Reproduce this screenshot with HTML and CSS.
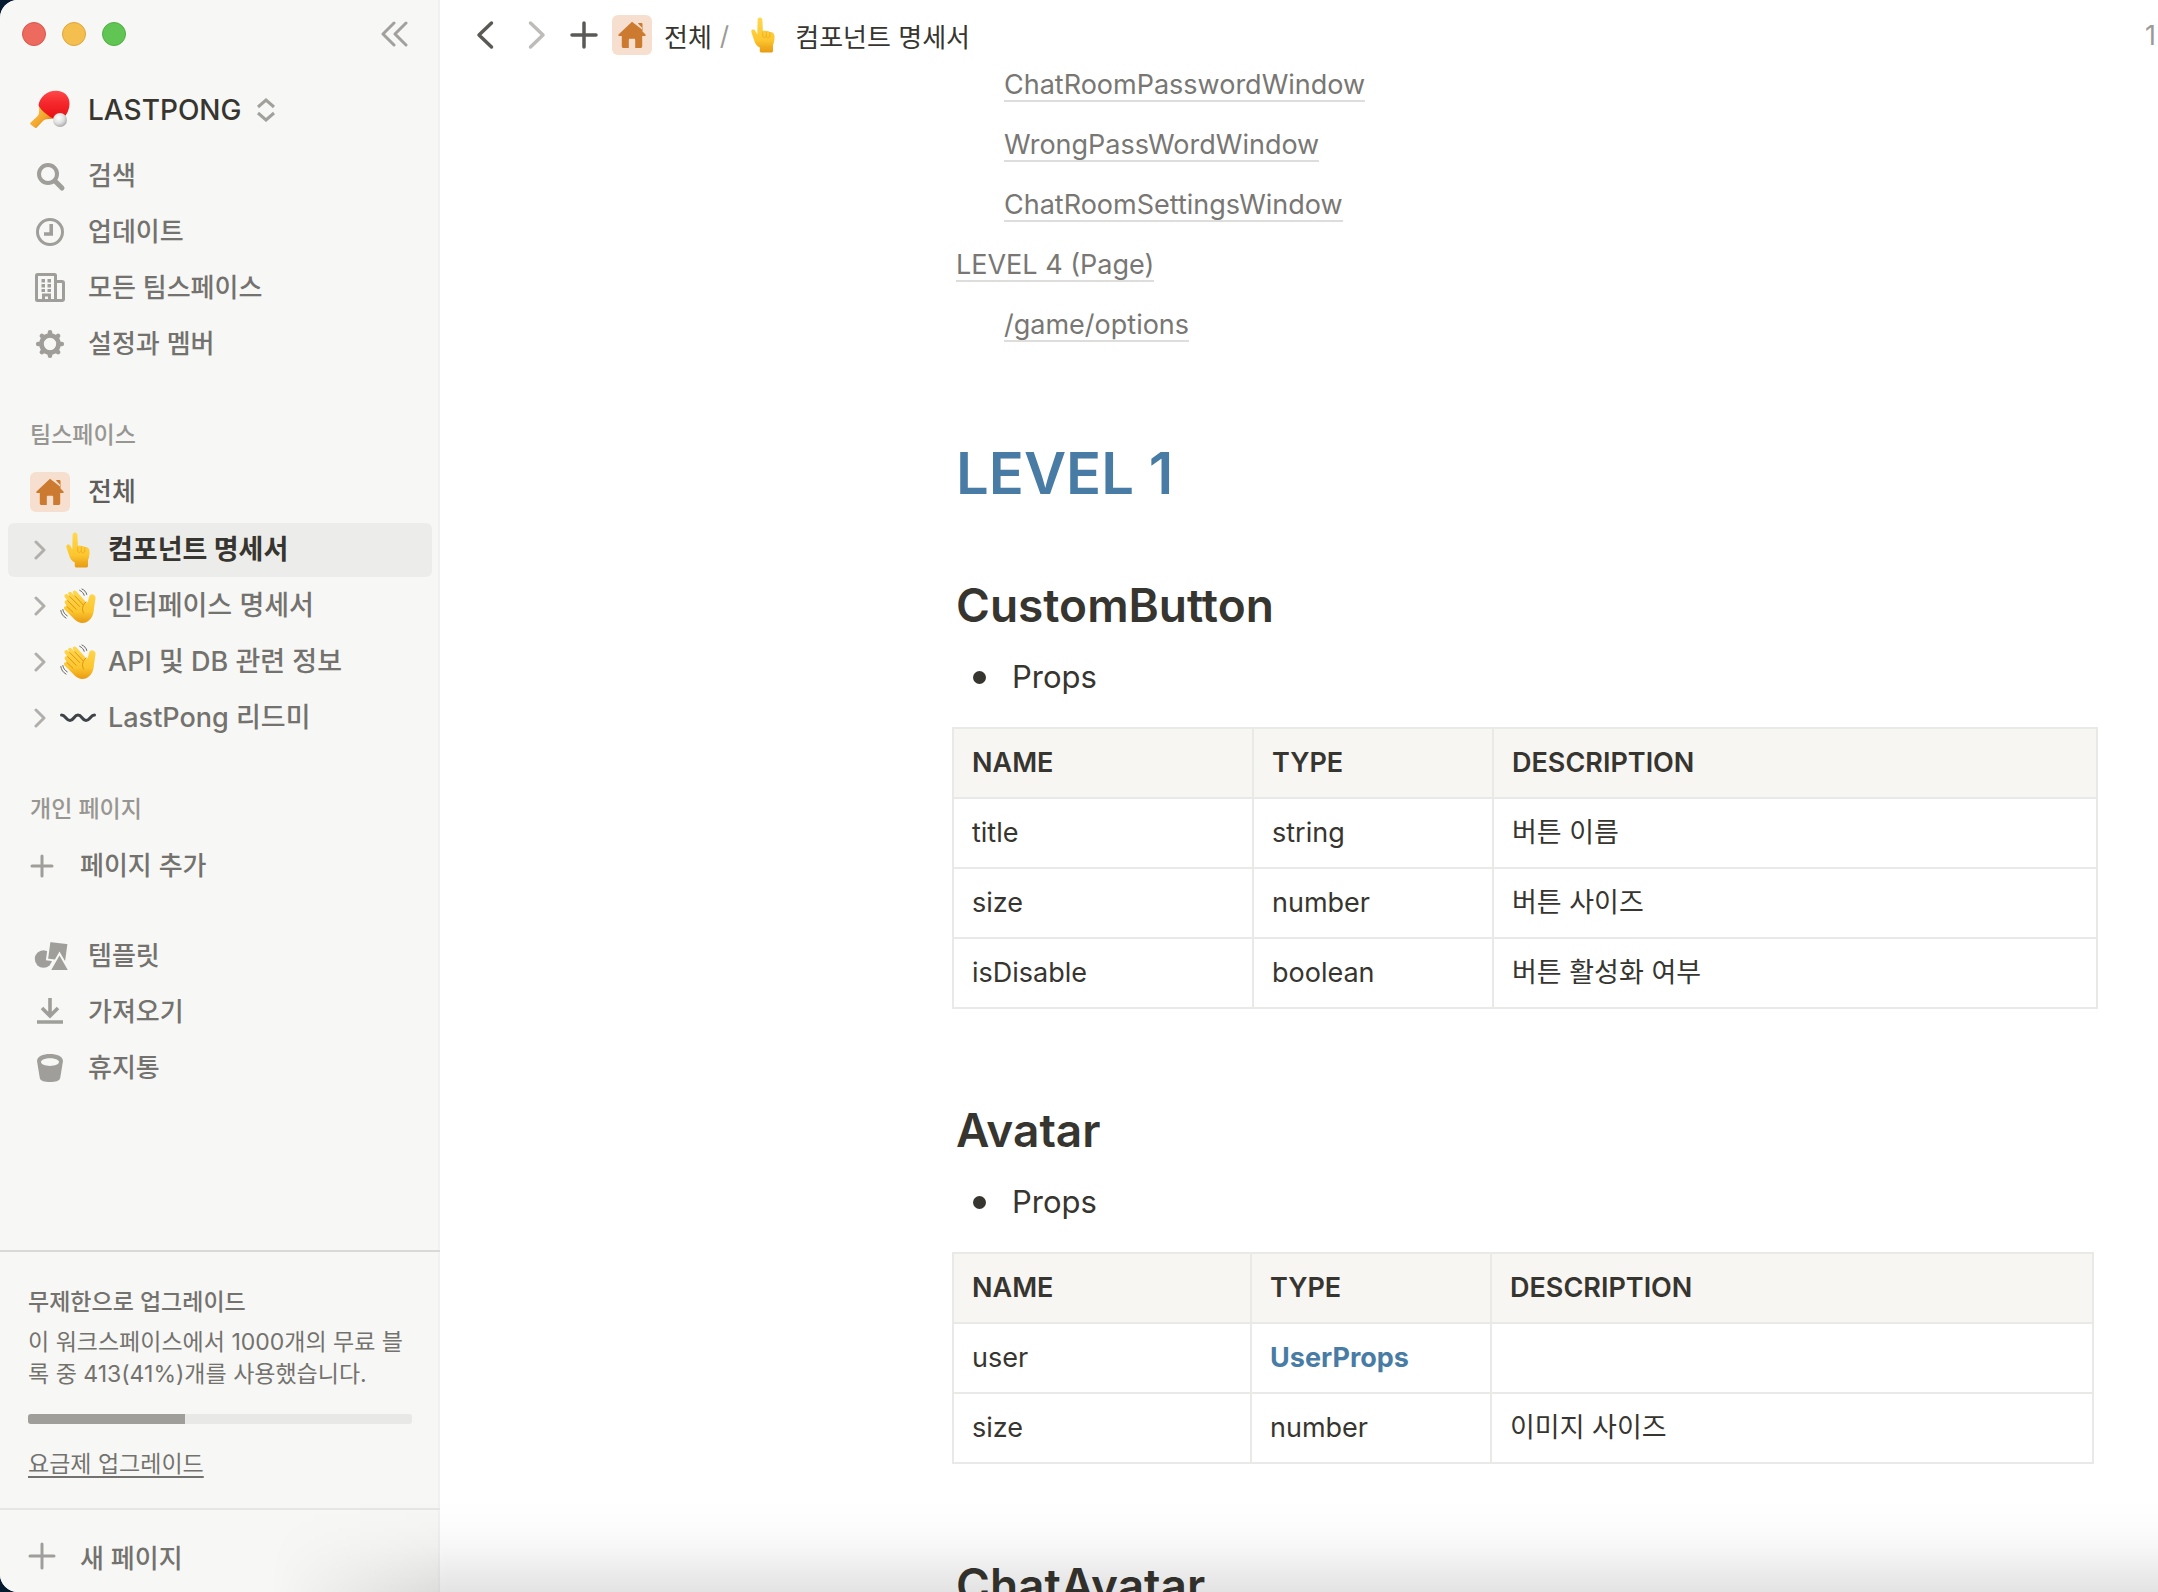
FILE: index.html
```html
<!DOCTYPE html>
<html lang="ko">
<head>
<meta charset="utf-8">
<title>컴포넌트 명세서</title>
<link rel="stylesheet" href="styles.css">
</head>
<body>
<svg class="defs" aria-hidden="true">
  <defs>
    <linearGradient id="skin" x1="0" y1="0" x2="0" y2="1">
      <stop offset="0" stop-color="#ffd84f"/><stop offset=".65" stop-color="#fcc62f"/><stop offset="1" stop-color="#e89a12"/>
    </linearGradient>
    <linearGradient id="rubber" x1="0" y1="0" x2="0" y2="1">
      <stop offset="0" stop-color="#ff4a4a"/><stop offset=".4" stop-color="#f52a2e"/><stop offset="1" stop-color="#e80f14"/>
    </linearGradient>
    <radialGradient id="ball" cx=".4" cy=".35" r=".8">
      <stop offset="0" stop-color="#fff"/><stop offset=".5" stop-color="#dedede"/><stop offset="1" stop-color="#8e8e8e"/>
    </radialGradient>
    <linearGradient id="grip" x1="0" y1="0" x2="1" y2="1">
      <stop offset="0" stop-color="#ffcf52"/><stop offset=".55" stop-color="#f3a52c"/><stop offset="1" stop-color="#b8640c"/>
    </linearGradient>
  </defs>
  <symbol id="house" viewBox="0 0 28 28">
    <path fill="#cb7a2f" d="M14 .8 .5 13.400c-.6.8-.2 1.600.7 1.600h2.600v10.600c0 .9.6 1.400 1.400 1.400H10.800V19c0-.8.4-1.200 1.200-1.200h4c.8 0 1.200.4 1.200 1.200v8h5.600c.8 0 1.400-.5 1.400-1.400V15h2.600c.9 0 1.300-.8.7-1.600L24.500 10.400V3.200c0-.8-.4-1.200-1.200-1.200h-2.200c-.5 0-.8.1-1.100.4l4 4.300v1.900z"/>
  </symbol>
  <symbol id="point" viewBox="0 0 24 36">
    <path fill="url(#skin)" d="M6.600 3.200C6.600 1.400 7.600.5 9 .5s2.400 1 2.400 2.700l.5 10.900c1-.7 2.400-.7 3.400.2 1.200-.6 2.600-.3 3.500.7 2.600-.3 4.600 1.200 4.700 4.200.1 3.500-.4 6.400-1.500 8.900v6c0 .9-.5 1.400-1.400 1.400H10.200c-.9 0-1.400-.5-1.400-1.400v-3.500C5.600 28.900 4 26.600 3 23L.5 15.600c-.5-1.500 0-2.700 1.100-3.100 1.300-.4 2.300.3 3 1.700l1.700 3.200z"/>
    <path fill="none" stroke="#eeaa1c" stroke-width=".8" stroke-linecap="round" d="M11.700 15v4c.2 2 3.200 2 3.400.2M15.300 14.800v4.600c.3 1.900 3.100 1.900 3.400.1M18.800 15.500v4M9.400 29.500c3.500 1.300 8.500 1.300 12-.4"/>
  </symbol>
  <symbol id="wave" viewBox="0 0 36 36">
    <path fill="url(#skin)" d="M5 15.200c-1.300-1.800.9-3.900 2.600-2.500L4.800 9.200C3.500 7.300 5.900 5 7.700 6.600l2 1.900-1.200-1.900C7.400 4.600 9.800 2.800 11.500 4.500l3.300 3.400-1.700-2.700c-1.200-2 1.400-3.800 2.900-2.100l9.700 10.700c1.200 1.200 2.200.4 2.400-1.200l1-3.800c.5-2 2-2.800 3.700-2.400 2.100.5 2.900 1.800 2.700 3.900L34 20.500c-.3 6.500-3 11.600-7.800 13.700-4.500 1.900-8.900.1-12.300-3.400L4.500 21.300c-1.700-1.800.5-4.100 2.400-2.700z"/>
    <path fill="none" stroke="#df9415" stroke-width="1" stroke-linecap="round" d="m7.600 12.700 8.600 8.600M9.700 8.500l10 10M14.800 7.900l8.300 8.900M6.900 18.600l6 5.600M26 14c-3.500 3-4.500 7-2.500 11"/>
    <path fill="none" stroke="#666" stroke-width="1" stroke-linecap="round" d="M22 1c2.400 1 4.200 3 4.800 5.500M19.700 2.300c2.300 1 4 3 4.500 5M.8 22.500c.4 3.200 2.300 6 5.200 7.600M2.800 21.500c.4 2.600 2 5 4.400 6.300"/>
  </symbol>
  <symbol id="chev" viewBox="0 0 12 20">
    <path fill="none" stroke="#b0afac" stroke-width="3" stroke-linecap="round" stroke-linejoin="round" d="m2 2 8 8-8 8"/>
  </symbol>
</svg>

<div class="app">
  <aside class="sidebar">
    <header class="titlebar">
      <div class="lights">
        <button class="light red" aria-label="닫기"></button>
        <button class="light yellow" aria-label="최소화"></button>
        <button class="light green" aria-label="확대"></button>
      </div>
      <button class="collapse" aria-label="사이드바 닫기">
        <svg width="28" height="26" viewBox="0 0 28 26"><path fill="none" stroke="#a1a09c" stroke-width="3" stroke-linecap="round" stroke-linejoin="round" d="M14 2 3 13l11 11M26 2 15 13l11 11"/></svg>
      </button>
    </header>

    <button class="workspace">
      <svg class="slot" viewBox="0 0 40 40">
        <path fill="url(#grip)" d="M9 15.500 24 28.500l-7.500.7c-2 .3-3.300 1.300-4.500 2.700L6.800 37.400c-.7.700-1.400.8-2.100.2L.7 34.400c-.7-.6-.7-1.300 0-2L7.400 26.200c1.200-1.300 1.700-2.700 1.700-4.500z"/>
        <path fill="url(#rubber)" d="M8.500 15.500C9.500 7 17 .7 26 .7c8 0 13.500 5.300 13.500 12.500 0 6.300-2.500 11.500-7 15.600l-9.300-.4c-3-1-12-7.500-14.700-12.900z"/>
        <circle cx="30" cy="30" r="7" fill="url(#ball)"/>
      </svg>
      <span>LASTPONG</span>
      <svg width="18" height="24" viewBox="0 0 18 24"><path fill="none" stroke="#a1a09c" stroke-width="3" d="m1 9 8-7 8 7M1 15l8 7 8-7"/></svg>
    </button>

    <nav class="group">
      <a class="item" href="#"><svg class="slot" viewBox="0 0 40 40"><g fill="none" stroke="#9f9e9a"><circle cx="18" cy="18" r="9" stroke-width="4"/><path stroke-width="5" stroke-linecap="round" d="m25 25 7 7"/></g></svg><span>검색</span></a>
      <a class="item" href="#"><svg class="slot" viewBox="0 0 40 40"><g fill="none" stroke="#9f9e9a" stroke-width="3"><circle cx="20" cy="20" r="12.500"/><path stroke-width="3.600" d="M21.200 12v10H14"/></g></svg><span>업데이트</span></a>
      <a class="item" href="#"><svg class="slot" viewBox="0 0 40 40"><g fill="none" stroke="#9f9e9a" stroke-width="3"><rect x="6.500" y="6.500" width="19" height="26" rx="1"/><path d="M26 13.500h6c1 0 1.500.5 1.500 1.500v16c0 1-.5 1.500-1.500 1.500h-7M13.500 33v-6h6v6" /></g><path fill="#9f9e9a" d="M11.500 11H15v3.500h-3.500zM17.500 11H21v3.500h-3.500zM11.500 16H15v3.500h-3.500zM17.500 16H21v3.500h-3.500zM11.500 21H15v3h-3.500zM17.500 21H21v3h-3.500z"/></svg><span>모든 팀스페이스</span></a>
      <a class="item" href="#"><svg class="slot" viewBox="0 0 40 40"><circle cx="20" cy="20" r="8.500" fill="none" stroke="#9f9e9a" stroke-width="4.600"/><g stroke="#9f9e9a" stroke-width="4.600" stroke-linecap="round"><path d="M20 8.200v3M20 28.800v3M8.200 20h3M28.800 20h3M11.900 11.900l2 2M26.100 26.100l2 2M11.900 28.100l2-2M26.100 13.900l2-2"/></g></svg><span>설정과 멤버</span></a>
    </nav>

    <h2 class="label">팀스페이스</h2>
    <a class="item team" href="#"><span class="slot home"><svg width="28" height="28"><use href="#house"/></svg></span><span>전체</span></a>
    <nav class="group pages">
      <a class="item page current" href="#"><svg class="chev"><use href="#chev"/></svg><svg class="emoji"><use href="#point"/></svg><span>컴포넌트 명세서</span></a>
      <a class="item page" href="#"><svg class="chev"><use href="#chev"/></svg><svg class="emoji"><use href="#wave"/></svg><span>인터페이스 명세서</span></a>
      <a class="item page" href="#"><svg class="chev"><use href="#chev"/></svg><svg class="emoji"><use href="#wave"/></svg><span>API 및 DB 관련 정보</span></a>
      <a class="item page" href="#"><svg class="chev"><use href="#chev"/></svg><svg class="emoji" viewBox="0 0 36 36"><path fill="none" stroke="#3e4347" stroke-width="3" stroke-linecap="round" d="M1.500 15c4 0 4.500 5.500 8.500 5.500S14 15 18 15s4 5.500 8 5.500 4.500-5.500 8.500-5.500"/></svg><span>LastPong 리드미</span></a>
    </nav>

    <h2 class="label">개인 페이지</h2>
    <button class="item add"><svg width="24" height="24" viewBox="0 0 24 24"><path stroke="#9f9e9a" stroke-width="3" stroke-linecap="round" d="M12 2v20M2 12h20"/></svg><span>페이지 추가</span></button>

    <nav class="group tools">
      <a class="item" href="#"><svg class="slot" viewBox="0 0 40 40"><g fill="#9f9e9a"><circle cx="13.500" cy="23" r="8.700"/><path stroke="#f7f7f5" stroke-width="2" d="m19.500 5 19 2.200L36 26l-19-2.500z"/><path stroke="#f7f7f5" stroke-width="2" d="m29.500 17.500 10 17.500h-20z"/></g></svg><span>템플릿</span></a>
      <a class="item" href="#"><svg class="slot" viewBox="0 0 40 40"><g fill="none" stroke="#9f9e9a" stroke-width="3.600"><path d="M20 6v17M12 16l8 8 8-8M7 30h26"/></g></svg><span>가져오기</span></a>
      <a class="item" href="#"><svg class="slot" viewBox="0 0 40 40"><path fill="#9f9e9a" fill-rule="evenodd" d="M20 6c7 0 13 2.500 13 7l-2.800 17c-.5 3-5 4-10.200 4s-9.700-1-10.200-4L7 13c0-4.500 6-7 13-7zm0 4.200c-5 0-9 1.600-9 3.900s4 3.900 9 3.900 9-1.600 9-3.900-4-3.900-9-3.900z"/></svg><span>휴지통</span></a>
    </nav>

    <section class="plan">
      <h3>무제한으로 업그레이드</h3>
      <p>이 워크스페이스에서 1000개의 무료 블록 중 413(41%)개를 사용했습니다.</p>
      <div class="meter"><div class="meter-fill" style="width:41%"></div></div>
      <a href="#">요금제 업그레이드</a>
    </section>
    <button class="new-page"><svg width="28" height="28" viewBox="0 0 28 28"><path stroke="#9f9e9a" stroke-width="3" stroke-linecap="round" d="M14 2v24M2 14h24"/></svg><span>새 페이지</span></button>
  </aside>

  <main class="main">
    <header class="topbar">
      <button class="tool" aria-label="뒤로"><svg width="18" height="30" viewBox="0 0 18 30"><path fill="none" stroke="#5a5955" stroke-width="3.500" stroke-linecap="round" stroke-linejoin="round" d="M15.500 3 3 15l12.500 12"/></svg></button>
      <button class="tool forward" aria-label="앞으로"><svg width="18" height="30" viewBox="0 0 18 30"><path fill="none" stroke="#bdbcba" stroke-width="3.500" stroke-linecap="round" stroke-linejoin="round" d="m2.500 3 12.500 12-12.500 12"/></svg></button>
      <button class="tool plus" aria-label="새 탭"><svg width="28" height="28" viewBox="0 0 28 28"><path stroke="#5a5955" stroke-width="3.500" stroke-linecap="round" d="M14 2v24M2 14h24"/></svg></button>
      <nav class="crumbs">
        <a href="#"><span class="home"><svg width="28" height="28"><use href="#house"/></svg></span>전체</a>
        <span class="slash">/</span>
        <a href="#" class="here"><svg class="finger"><use href="#point"/></svg>컴포넌트 명세서</a>
      </nav>
      <span class="edited">1</span>
    </header>

    <article class="doc">
      <nav class="toc">
        <a class="sub" href="#">ChatRoomPasswordWindow</a>
        <a class="sub" href="#">WrongPassWordWindow</a>
        <a class="sub" href="#">ChatRoomSettingsWindow</a>
        <a href="#">LEVEL 4 (Page)</a>
        <a class="sub" href="#">/game/options</a>
      </nav>

      <h1>LEVEL 1</h1>

      <h2>CustomButton</h2>
      <ul><li>Props</li></ul>
      <table>
        <colgroup><col class="c-name"><col class="c-type"><col></colgroup>
        <thead><tr><th>NAME</th><th>TYPE</th><th>DESCRIPTION</th></tr></thead>
        <tbody>
          <tr><td>title</td><td>string</td><td>버튼 이름</td></tr>
          <tr><td>size</td><td>number</td><td>버튼 사이즈</td></tr>
          <tr><td>isDisable</td><td>boolean</td><td>버튼 활성화 여부</td></tr>
        </tbody>
      </table>

      <h2>Avatar</h2>
      <ul><li>Props</li></ul>
      <table class="narrow">
        <colgroup><col class="c-name"><col class="c-type"><col></colgroup>
        <thead><tr><th>NAME</th><th>TYPE</th><th>DESCRIPTION</th></tr></thead>
        <tbody>
          <tr><td>user</td><td><a href="#">UserProps</a></td><td></td></tr>
          <tr><td>size</td><td>number</td><td>이미지 사이즈</td></tr>
        </tbody>
      </table>

      <h2>ChatAvatar</h2>
    </article>
  </main>
  <div class="shade"></div>
</div>
</body>
</html>
```
FILE: styles.css
```css
* { box-sizing: border-box; }

html, body { height: 100%; }

body {
  margin: 0;
  overflow: hidden;
  background: #061a30;
  color: #37352f;
  font-family: Inter, "Noto Sans CJK KR", sans-serif;
  font-size: 26px;
}

a { color: inherit; text-decoration: none; }

button {
  padding: 0;
  border: 0;
  background: none;
  color: inherit;
  font: inherit;
  text-align: left;
}

h1, h2, h3, p, ul { margin: 0; padding: 0; }
svg { display: block; flex: none; }

.defs { position: absolute; width: 0; height: 0; }

.app {
  position: relative;
  display: grid;
  grid-template-columns: 440px 1fr;
  height: 100vh;
  overflow: hidden;
  border-radius: 18px 0 0 18px;
  background: #fff;
}

/* Sidebar */
.sidebar {
  display: flex;
  flex-direction: column;
  min-height: 0;
  box-shadow: inset -2px 0 #f1f1ef;
  background: #f7f7f5;
  color: #73726e;
  font-weight: 500;
}

.titlebar {
  display: flex;
  flex: none;
  align-items: center;
  justify-content: space-between;
  height: 68px;
  padding: 0 32px 0 22px;
}

.lights { display: flex; gap: 16px; }
.light { width: 24px; height: 24px; border: 1px solid; border-radius: 50%; }
.red { background: #ed6a5f; border-color: #d9564c; }
.yellow { background: #f5bf4f; border-color: #dca73c; }
.green { background: #61c554; border-color: #4fae43; }

.workspace {
  display: flex;
  flex: none;
  align-items: center;
  height: 81px;
  padding: 2px 0 0 30px;
  color: #37352f;
  font-size: 28px;
}
.workspace span { margin: 0 16px 0 18px; }

.slot { flex: none; width: 40px; height: 40px; }

.group { display: flex; flex-direction: column; gap: 2px; }

.item {
  display: flex;
  flex: none;
  align-items: center;
  gap: 18px;
  height: 54px;
  margin: 0 8px;
  padding-left: 22px;
  border-radius: 6px;
  line-height: 54px;
}

.label {
  flex: none;
  height: 40px;
  margin-top: 44px;
  padding-left: 30px;
  color: #979692;
  font-size: 23px;
  font-weight: 500;
  line-height: 40px;
}

.team { margin-top: 10px; color: #5f5e5b; }
.pages { margin-top: 4px; font-size: 27px; }
.page { gap: 0; padding-left: 26px; }
.current { background: #ececea; color: #37352f; font-weight: 700; }
.chev { width: 12px; height: 20px; }
.emoji { width: 36px; height: 36px; margin: 0 12px 0 14px; }

.home {
  display: grid;
  place-items: center;
  width: 40px;
  height: 40px;
  border-radius: 6px;
  background: #f6dfce;
}

.add { gap: 26px; margin-top: 10px; }
.tools { margin-top: 36px; }

.plan {
  margin-top: auto;
  padding: 34px 28px 0;
  height: 258px;
  border-top: 2px solid #d9d9d7;
  font-size: 23px;
  line-height: 32px;
  font-weight: 400;
}
.plan h3 { margin-bottom: 8px; font-size: 23px; font-weight: 500; }
.plan p { word-break: break-all; }
.meter {
  height: 10px;
  margin: 24px 0 24px;
  overflow: hidden;
  border-radius: 3px;
  background: #e8e8e6;
}
.meter-fill { height: 100%; background: #9f9e9a; }
.plan a { text-decoration: underline; text-underline-offset: 4px; }

.new-page {
  display: flex;
  flex: none;
  align-items: center;
  gap: 24px;
  height: 84px;
  padding: 10px 0 0 28px;
  border-top: 2px solid #e6e6e4;
}

/* Document pane */
.main { display: flex; flex-direction: column; min-width: 0; min-height: 0; overflow: hidden; }

.topbar {
  display: flex;
  flex: none;
  align-items: center;
  height: 70px;
  padding-left: 36px;
  background: #fff;
}
.forward { margin-left: 34px; }
.plus { margin: 0 14px 0 24px; }
.crumbs { display: flex; align-items: center; }
.crumbs a { display: flex; align-items: center; gap: 12px; }
.slash { margin: 0 22px 0 8px; color: #9b9a97; }
.crumbs .here { gap: 20px; }
.finger { width: 24px; height: 36px; }
.edited { margin-left: auto; padding-right: 2px; color: #9b9a97; font-size: 27px; }

.doc { padding: 0 60px 0 512px; }

.toc {
  display: flex;
  flex-direction: column;
  align-items: flex-start;
  gap: 28px;
  padding: 0 4px;
  color: #787774;
  font-size: 27px;
  line-height: 30px;
}
.toc a { border-bottom: 2px solid #dddddb; }
.toc .sub { margin-left: 48px; }

h1 {
  margin-top: 92px;
  padding-left: 4px;
  color: #487ca5;
  font-size: 58px;
  font-weight: 600;
  line-height: 78px;
}

.doc h2 {
  margin-top: 91px;
  padding-left: 4px;
  font-size: 46px;
  font-weight: 600;
  line-height: 60px;
}
.doc h1 + h2 { margin-top: 63px; }

.doc ul {
  display: flex;
  margin: 18px 0 26px;
  padding-left: 21px;
  font-size: 31px;
  line-height: 48px;
  list-style: none;
}
.doc li { display: flex; align-items: center; gap: 26px; }
.doc li::before {
  width: 13px;
  height: 13px;
  border-radius: 50%;
  background: #37352f;
  content: "";
}

table {
  width: 100%;
  border-collapse: collapse;
  table-layout: fixed;
  font-size: 27px;
  line-height: 40px;
}
.c-name { width: 300px; }
.c-type { width: 240px; }
.narrow { width: calc(100% - 4px); }
.narrow .c-name { width: 298px; }
th, td {
  height: 70px;
  padding: 0 18px;
  border: 2px solid #e9e9e7;
  text-align: left;
}
th { background: #f7f6f3; font-weight: 600; }
td a { color: #487ca5; font-weight: 700; }

/* Soft shadow rising from the lower edge */
.shade {
  position: absolute;
  right: 0;
  bottom: 0;
  left: 270px;
  height: 92px;
  background: linear-gradient(to top, rgba(0, 0, 0, 0.11), rgba(0, 0, 0, 0.07) 25%, rgba(0, 0, 0, 0.03) 50%, rgba(0, 0, 0, 0.01) 72%, transparent);
  -webkit-mask-image: linear-gradient(to right, transparent, #000 180px);
  mask-image: linear-gradient(to right, transparent, #000 180px);
  pointer-events: none;
}
```
